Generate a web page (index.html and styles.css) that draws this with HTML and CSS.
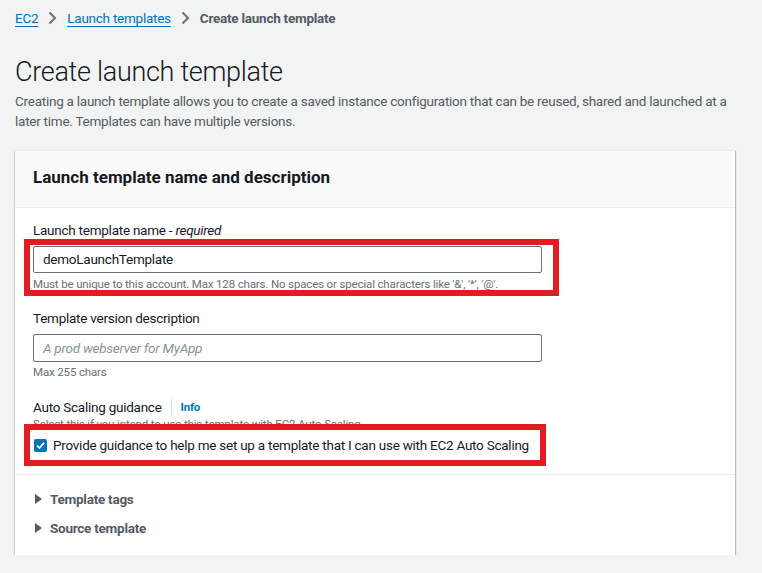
FILE: index.html
```html
<!DOCTYPE html>
<html lang="en">
<head>
<meta charset="utf-8">
<title>Create launch template</title>
<link rel="stylesheet" href="styles.css">
</head>
<body>
<nav class="crumbs">
  <a class="crumb-link" href="#">EC2</a>
  <svg class="chev" width="9" height="14" viewBox="0 0 9 14"><path d="M1.5 1.5 L7 7 L1.5 12.5" fill="none" stroke="#687078" stroke-width="2"/></svg>
  <a class="crumb-link" href="#">Launch templates</a>
  <svg class="chev" width="9" height="14" viewBox="0 0 9 14"><path d="M1.5 1.5 L7 7 L1.5 12.5" fill="none" stroke="#687078" stroke-width="2"/></svg>
  <span class="crumb-current">Create launch template</span>
</nav>

<h1 class="title">Create launch template</h1>
<p class="desc">Creating a launch template allows you to create a saved instance configuration that can be reused, shared and launched at a later time. Templates can have multiple versions.</p>

<section class="card">
  <header class="card-head">
    <h2 class="card-title">Launch template name and description</h2>
  </header>
  <div class="card-body">
    <div class="field field-name">
      <label class="label">Launch template name - <em>required</em></label>
      <div class="input input-value">demoLaunchTemplate</div>
      <div class="hint">Must be unique to this account. Max 128 chars. No spaces or special characters like '&amp;', '*', '@'.</div>
      <div class="mark mark-name"></div>
    </div>
    <div class="field field-desc">
      <label class="label">Template version description</label>
      <div class="input input-placeholder">A prod webserver for MyApp</div>
      <div class="hint">Max 255 chars</div>
    </div>
    <div class="field field-guid">
      <div class="label label-row"><span>Auto Scaling guidance</span><span class="info">Info</span></div>
      <div class="hint hint-tight">Select this if you intend to use this template with EC2 Auto Scaling</div>
      <div class="check-row">
        <span class="checkbox"><svg width="13" height="13" viewBox="0 0 13 13"><rect x="0" y="0" width="13" height="13" rx="2" fill="#0073bb"/><path d="M3 6.6 L5.4 9 L10 3.8" fill="none" stroke="#fff" stroke-width="1.8"/></svg></span>
        <span class="check-label">Provide guidance to help me set up a template that I can use with EC2 Auto Scaling</span>
      </div>
      <div class="mark mark-guid"></div>
    </div>
  </div>
  <div class="card-foot">
    <div class="expander"><svg class="tri" width="7" height="10" viewBox="0 0 7 10"><path d="M0 0 L7 5 L0 10 Z" fill="#545b64"/></svg><span>Template tags</span></div>
    <div class="expander"><svg class="tri" width="7" height="10" viewBox="0 0 7 10"><path d="M0 0 L7 5 L0 10 Z" fill="#545b64"/></svg><span>Source template</span></div>
  </div>
</section>
</body>
</html>
```

FILE: styles.css
```css
* { box-sizing: border-box; }
html, body { margin: 0; padding: 0; }
body {
  background: #f2f3f3;
  font-family: Roboto, "Liberation Sans", sans-serif;
  color: #16191f;
  padding: 0 15px;
  font-size: 13.5px;
  letter-spacing: -0.25px;
}
.crumbs {
  display: flex;
  align-items: center;
  height: 20px;
  margin-top: 8px;
  line-height: 20px;
}
.crumb-link {
  color: #0073bb;
  text-decoration: underline;
  text-underline-offset: 3px;
}
.chev { margin: 0 10px 0 10px; }
.crumb-current { color: #545b64; font-weight: 700; }
.title {
  margin: 26px 0 0;
  font-size: 27px;
  font-weight: 300;
  line-height: 36px;
  letter-spacing: -0.3px;
  color: #16191f;
}
.desc {
  margin: 1px 0 0;
  color: #545b64;
  line-height: 20px;
}
.card {
  margin-top: 19px;
  margin-right: 12px;
  background: #fff;
  border-top: 1px solid #eaeded;
  box-shadow: 0 1px 0 0 #9ba2a6, 1px 1px 1px 0 rgba(0,28,36,.25), -1px 1px 1px 0 rgba(0,28,36,.15);
}
.card-head {
  background: #fafafa;
  border-bottom: 1px solid #eaeded;
  height: 57px;
  display: flex;
  align-items: center;
  padding: 0 18px 4px;
}
.card-title {
  margin: 0;
  font-size: 17px;
  font-weight: 700;
  letter-spacing: 0;
  color: #16191f;
}
.card-body {
  padding: 12px 18px 19px;
  border-bottom: 1px solid #eaeded;
}
.field { position: relative; }
.label {
  display: block;
  line-height: 20px;
  color: #16191f;
}
.label em { font-style: italic; }
.input {
  width: 509px;
  height: 27px;
  border: 1px solid #687078;
  border-radius: 2px;
  padding: 0 9px;
  line-height: 25px;
  margin-top: 6px;
}
.input-value { color: #16191f; }
.input-placeholder { color: #879596; font-style: italic; height: 28px; line-height: 26px; }
.hint {
  font-size: 11.5px;
  letter-spacing: -0.15px;
  line-height: 16px;
  color: #687078;
  margin-top: 3px;
}
.field-desc { margin-top: 16px; }
.field-desc .hint { margin-top: 2px; }
.field-guid { margin-top: 18px; }
.label-row { display: flex; align-items: center; line-height: 18px; }
.info {
  color: #0073bb;
  font-size: 11.5px;
  font-weight: 700;
  border-left: 1px solid #d5dbdb;
  margin-left: 9px;
  padding-left: 9px;
  line-height: 16px;
}
.hint-tight { margin-top: 0; }
.check-row {
  display: flex;
  align-items: center;
  margin-top: 3px;
  height: 20px;
}
.checkbox { display: flex; width: 13px; height: 13px; margin-left: 1px; }
.check-label { margin-left: 6px; color: #16191f; }
.mark {
  position: absolute;
  border: 6px solid #e51b22;
  pointer-events: none;
}
.mark-name { left: -9px; top: 19px; width: 535px; height: 57px; }
.mark-guid { left: -9px; top: 26px; width: 522px; height: 42px; }
.card-foot { padding: 9px 18px 13px; }
.expander {
  display: flex;
  align-items: center;
  height: 29px;
  font-weight: 700;
  color: #545b64;
}
.tri { margin-left: 2px; margin-right: 8px; }
```
